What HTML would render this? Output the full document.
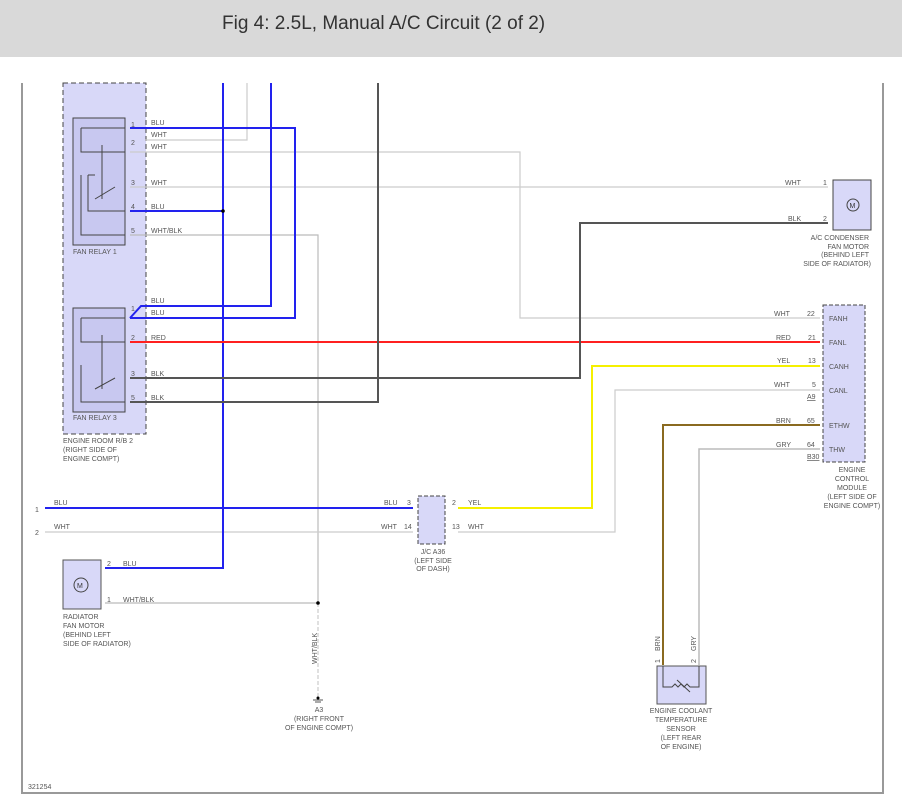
<!DOCTYPE html><html><head><style>body{margin:0;background:#fff}svg{display:block}text{font-family:"Liberation Sans",sans-serif;font-size:7px;fill:#555}</style></head><body>
<svg width="902" height="805" viewBox="0 0 902 805" xmlns="http://www.w3.org/2000/svg">
<rect width="902" height="57" fill="#d9d9d9"/>
<text x="222" y="29" style="font-size:19px;fill:#333">Fig 4: 2.5L, Manual A/C Circuit (2 of 2)</text>
<path d="M22 83V793H883V83" fill="none" stroke="#999" stroke-width="2"/>
<rect x="63" y="83" width="83" height="351" fill="#d8d8f8" stroke="#444" stroke-dasharray="5,3"/>
<rect x="73" y="118" width="52" height="127" fill="#c8c8f0" stroke="#444"/>
<rect x="73" y="308" width="52" height="104" fill="#c8c8f0" stroke="#444"/>
<g fill="none" stroke="#444" stroke-width="1">
<path d="M81 128H125M81 128V152H125M81 175V235H125M88 175H95M88 175V211H125M95 199L115 187M102 145V199" />
<path d="M81 318H125M81 318V342H125M81 365V402H125M95 389L115 378M102 335V389"/>
</g>
<g fill="none" stroke-width="1.2">
<path d="M247 83V140H145" stroke="#ccc"/>
<path d="M130 152H520V318H820" stroke="#ccc"/>
<path d="M130 187H828" stroke="#ccc"/>
<path d="M130 235H318V603" stroke="#bbb"/>
<path d="M318 603V700" stroke="#ccc" stroke-dasharray="4,2"/>
<path d="M105 603H318" stroke="#bbb"/>
<path d="M45 532H413M458 532H615V390H820" stroke="#ccc"/>
<path d="M699 665V449H820" stroke="#bbb" stroke-width="1.5"/>
</g>
<g fill="none" stroke-width="2">
<path d="M223 83V568H105" stroke="#2222ee"/>
<path d="M130 211H223" stroke="#2222ee"/>
<path d="M271 83V306H141L130 318" stroke="#2222ee"/>
<path d="M130 128H295V318H130" stroke="#2222ee"/>
<path d="M45 508H413" stroke="#2222ee"/>
<path d="M130 342H820" stroke="#ff2020"/>
<path d="M130 378H580V223H828" stroke="#555"/>
<path d="M130 402H378V83" stroke="#555"/>
<path d="M458 508H592V366H820" stroke="#f5f000"/>
<path d="M663 665V425H820" stroke="#8a6a20"/>
</g>
<circle cx="223" cy="211" r="1.8" fill="#000"/><circle cx="318" cy="603" r="1.8" fill="#000"/><circle cx="318" cy="698" r="1.5" fill="#000"/>
<path d="M313 700H323M315 702H321" stroke="#555"/>
<rect x="823" y="305" width="42" height="157" fill="#d8d8f8" stroke="#444" stroke-dasharray="4,2"/>
<rect x="833" y="180" width="38" height="50" fill="#d8d8f8" stroke="#444"/>
<circle cx="853" cy="205" r="6" fill="none" stroke="#444"/><text x="849.5" y="208" style="fill:#333">M</text>
<rect x="418" y="496" width="27" height="48" fill="#d8d8f8" stroke="#444" stroke-dasharray="4,2"/>
<rect x="63" y="560" width="38" height="49" fill="#d8d8f8" stroke="#555"/>
<circle cx="81" cy="585" r="7" fill="none" stroke="#444"/><text x="77" y="588" style="fill:#333">M</text>
<rect x="657" y="666" width="49" height="38" fill="#d8d8f8" stroke="#555"/>
<path d="M663 666V687H672l3-3 3 3 3-3 3 3 3-3 3 3H699V666M677 680L690 692" fill="none" stroke="#444"/>
<text x="151" y="125">BLU</text><text x="151" y="137">WHT</text><text x="151" y="149">WHT</text><text x="151" y="185">WHT</text><text x="151" y="209">BLU</text><text x="151" y="233">WHT/BLK</text>
<text x="131" y="127">1</text><text x="131" y="145">2</text><text x="131" y="185">3</text><text x="131" y="209">4</text><text x="131" y="233">5</text>
<text x="151" y="303">BLU</text><text x="151" y="315">BLU</text><text x="151" y="340">RED</text><text x="151" y="376">BLK</text><text x="151" y="400">BLK</text>
<text x="131" y="311">1</text><text x="131" y="340">2</text><text x="131" y="376">3</text><text x="131" y="400">5</text>
<text x="73" y="254">FAN RELAY 1</text><text x="73" y="420">FAN RELAY 3</text>
<text x="63" y="443">ENGINE ROOM R/B 2</text><text x="63" y="452">(RIGHT SIDE OF</text><text x="63" y="461">ENGINE COMPT)</text>
<text x="785" y="185">WHT</text><text x="823" y="185">1</text><text x="788" y="221">BLK</text><text x="823" y="221">2</text>
<text x="869" y="240" text-anchor="end">A/C CONDENSER</text><text x="869" y="249" text-anchor="end">FAN MOTOR</text><text x="869" y="257" text-anchor="end">(BEHIND LEFT</text><text x="871" y="266" text-anchor="end">SIDE OF RADIATOR)</text>
<text x="774" y="316">WHT</text><text x="807" y="316">22</text><text x="829" y="321">FANH</text>
<text x="776" y="340">RED</text><text x="808" y="340">21</text><text x="829" y="345">FANL</text>
<text x="777" y="363">YEL</text><text x="808" y="363">13</text><text x="829" y="369">CANH</text>
<text x="774" y="387">WHT</text><text x="812" y="387">5</text><text x="829" y="393">CANL</text><text x="807" y="399" text-decoration="underline">A9</text>
<text x="776" y="423">BRN</text><text x="807" y="423">65</text><text x="829" y="428">ETHW</text>
<text x="776" y="447">GRY</text><text x="807" y="447">64</text><text x="829" y="452">THW</text><text x="807" y="459" text-decoration="underline">B30</text>
<text x="852" y="472" text-anchor="middle">ENGINE</text><text x="852" y="481" text-anchor="middle">CONTROL</text><text x="852" y="490" text-anchor="middle">MODULE</text><text x="852" y="499" text-anchor="middle">(LEFT SIDE OF</text><text x="852" y="508" text-anchor="middle">ENGINE COMPT)</text>
<text x="35" y="512">1</text><text x="35" y="535">2</text><text x="54" y="505">BLU</text><text x="54" y="529">WHT</text>
<text x="384" y="505">BLU</text><text x="407" y="505">3</text><text x="381" y="529">WHT</text><text x="404" y="529">14</text>
<text x="452" y="505">2</text><text x="468" y="505">YEL</text><text x="452" y="529">13</text><text x="468" y="529">WHT</text>
<text x="433" y="554" text-anchor="middle">J/C A36</text><text x="433" y="563" text-anchor="middle">(LEFT SIDE</text><text x="433" y="571" text-anchor="middle">OF DASH)</text>
<text x="107" y="566">2</text><text x="123" y="566">BLU</text><text x="107" y="602">1</text><text x="123" y="602">WHT/BLK</text>
<text x="63" y="619">RADIATOR</text><text x="63" y="628">FAN MOTOR</text><text x="63" y="637">(BEHIND LEFT</text><text x="63" y="646">SIDE OF RADIATOR)</text>
<text transform="translate(317,664) rotate(-90)">WHT/BLK</text>
<text x="319" y="712" text-anchor="middle">A3</text><text x="319" y="721" text-anchor="middle">(RIGHT FRONT</text><text x="319" y="730" text-anchor="middle">OF ENGINE COMPT)</text>
<text transform="translate(660,651) rotate(-90)">BRN</text><text transform="translate(696,651) rotate(-90)">GRY</text>
<text transform="translate(660,663) rotate(-90)">1</text><text transform="translate(696,663) rotate(-90)">2</text>
<text x="681" y="713" text-anchor="middle">ENGINE COOLANT</text><text x="681" y="722" text-anchor="middle">TEMPERATURE</text><text x="681" y="731" text-anchor="middle">SENSOR</text><text x="681" y="740" text-anchor="middle">(LEFT REAR</text><text x="681" y="749" text-anchor="middle">OF ENGINE)</text>
<text x="28" y="789">321254</text>
</svg></body></html>
